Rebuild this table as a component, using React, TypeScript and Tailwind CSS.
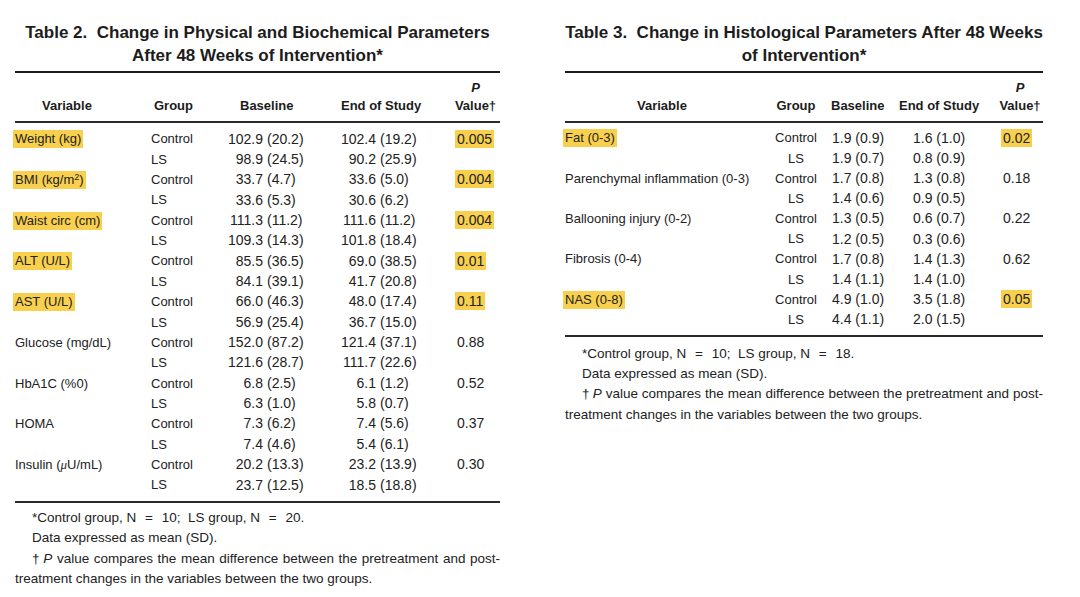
import React from 'react';

type Row = { v?: React.ReactNode; hl?: boolean; g: string; b: [string, string]; e: [string, string]; p?: string; phl?: boolean };

const leftRows: Row[] = [
  { v: 'Weight (kg)', hl: true, g: 'Control', b: ['102.9', '(20.2)'], e: ['102.4', '(19.2)'], p: '0.005', phl: true },
  { g: 'LS', b: ['98.9', '(24.5)'], e: ['90.2', '(25.9)'] },
  { v: <>BMI (kg/m<sup className="text-[9px]">2</sup>)</>, hl: true, g: 'Control', b: ['33.7', '(4.7)'], e: ['33.6', '(5.0)'], p: '0.004', phl: true },
  { g: 'LS', b: ['33.6', '(5.3)'], e: ['30.6', '(6.2)'] },
  { v: 'Waist circ (cm)', hl: true, g: 'Control', b: ['111.3', '(11.2)'], e: ['111.6', '(11.2)'], p: '0.004', phl: true },
  { g: 'LS', b: ['109.3', '(14.3)'], e: ['101.8', '(18.4)'] },
  { v: 'ALT (U/L)', hl: true, g: 'Control', b: ['85.5', '(36.5)'], e: ['69.0', '(38.5)'], p: '0.01', phl: true },
  { g: 'LS', b: ['84.1', '(39.1)'], e: ['41.7', '(20.8)'] },
  { v: 'AST (U/L)', hl: true, g: 'Control', b: ['66.0', '(46.3)'], e: ['48.0', '(17.4)'], p: '0.11', phl: true },
  { g: 'LS', b: ['56.9', '(25.4)'], e: ['36.7', '(15.0)'] },
  { v: 'Glucose (mg/dL)', g: 'Control', b: ['152.0', '(87.2)'], e: ['121.4', '(37.1)'], p: '0.88' },
  { g: 'LS', b: ['121.6', '(28.7)'], e: ['111.7', '(22.6)'] },
  { v: 'HbA1C (%0)', g: 'Control', b: ['6.8', '(2.5)'], e: ['6.1', '(1.2)'], p: '0.52' },
  { g: 'LS', b: ['6.3', '(1.0)'], e: ['5.8', '(0.7)'] },
  { v: 'HOMA', g: 'Control', b: ['7.3', '(6.2)'], e: ['7.4', '(5.6)'], p: '0.37' },
  { g: 'LS', b: ['7.4', '(4.6)'], e: ['5.4', '(6.1)'] },
  { v: <>Insulin (<i className="font-serif">μ</i>U/mL)</>, g: 'Control', b: ['20.2', '(13.3)'], e: ['23.2', '(13.9)'], p: '0.30' },
  { g: 'LS', b: ['23.7', '(12.5)'], e: ['18.5', '(18.8)'] },
];

const rightRows: Row[] = [
  { v: 'Fat (0-3)', hl: true, g: 'Control', b: ['1.9', '(0.9)'], e: ['1.6', '(1.0)'], p: '0.02', phl: true },
  { g: 'LS', b: ['1.9', '(0.7)'], e: ['0.8', '(0.9)'] },
  { v: 'Parenchymal inflammation (0-3)', g: 'Control', b: ['1.7', '(0.8)'], e: ['1.3', '(0.8)'], p: '0.18' },
  { g: 'LS', b: ['1.4', '(0.6)'], e: ['0.9', '(0.5)'] },
  { v: 'Ballooning injury (0-2)', g: 'Control', b: ['1.3', '(0.5)'], e: ['0.6', '(0.7)'], p: '0.22' },
  { g: 'LS', b: ['1.2', '(0.5)'], e: ['0.3', '(0.6)'] },
  { v: 'Fibrosis (0-4)', g: 'Control', b: ['1.7', '(0.8)'], e: ['1.4', '(1.3)'], p: '0.62' },
  { g: 'LS', b: ['1.4', '(1.1)'], e: ['1.4', '(1.0)'] },
  { v: 'NAS (0-8)', hl: true, g: 'Control', b: ['4.9', '(1.0)'], e: ['3.5', '(1.8)'], p: '0.05', phl: true },
  { g: 'LS', b: ['4.4', '(1.1)'], e: ['2.0', '(1.5)'] },
];

const Mark = ({ on, children, className = '' }: { on?: boolean; children: React.ReactNode; className?: string }) => (
  <span className={`inline-block leading-[18px] px-[2px] ${on ? 'bg-[#f8d04e]' : ''} ${className}`}>{children}</span>
);

const Title = ({ children }: { children: React.ReactNode }) => (
  <h2 className="pt-[21px] text-center text-[17px] font-bold leading-[23px] text-[#1c1c1c]">{children}</h2>
);

const PHead = ({ className }: { className: string }) => (
  <div className={`flex flex-col items-center ${className}`}>
    <span className="italic">P</span>
    <span>Value†</span>
  </div>
);

const Eq = () => <span className="mx-[5px]">=</span>;

// footnotes: last note split into its two printed lines, first one justified edge to edge
const Notes = ({ n }: { n: string }) => (
  <div className="text-[13.5px] leading-[20.3px] text-[#222]">
    <p className="pl-[17px]">
      *Control group, N <Eq /> 10;&nbsp; LS group, N <Eq /> {n}.
    </p>
    <p className="pl-[17px]">Data expressed as mean (SD).</p>
    <p className="pl-[17px] text-justify [text-align-last:justify]">
      <span className="mr-[3px]">†</span>
      <i>P</i> value compares the mean difference between the pretreatment and post-
    </p>
    <p>treatment changes in the variables between the two groups.</p>
  </div>
);

function LeftTable() {
  return (
    <div className="w-[485px] shrink-0">
      <Title>
        Table 2.&nbsp; Change in Physical and Biochemical Parameters
        <br />
        After 48 Weeks of Intervention*
      </Title>
      <div className="mt-[4px] h-[2px] bg-[#1a1a1a]" />
      <div className="grid grid-cols-[136px_64px_103px_126px_56px] items-end pt-[6px] pb-[6px] text-[13px] font-bold leading-[18px] text-[#1c1c1c]">
        <span className="pl-[27px]">Variable</span>
        <span className="pl-[3px]">Group</span>
        <span className="pl-[25px]">Baseline</span>
        <span className="pl-[23px]">End of Study</span>
        <PHead className="ml-[13px] w-[37px]" />
      </div>
      <div className="h-[2px] bg-[#2a2a2a]" />
      <div className="grid grid-cols-[136px_64px_103px_126px_56px] auto-rows-[20.35px] items-center pt-[6px] pb-[6px] text-[#222]">
        {leftRows.map((r, i) => (
          <React.Fragment key={i}>
            <span className="text-[13px]">{r.v && <Mark on={r.hl} className="-ml-[2px]">{r.v}</Mark>}</span>
            <span className="text-[13px]">{r.g}</span>
            <span className="flex text-[14px]">
              <span className="w-[48px] text-right">{r.b[0]}</span>
              <span className="pl-[4px]">{r.b[1]}</span>
            </span>
            <span className="flex text-[14px]">
              <span className="w-[58px] text-right">{r.e[0]}</span>
              <span className="pl-[4px]">{r.e[1]}</span>
            </span>
            <span className="pl-[11px] text-[14px]">{r.p && <Mark on={r.phl}>{r.p}</Mark>}</span>
          </React.Fragment>
        ))}
      </div>
      <div className="h-[2px] bg-[#2a2a2a]" />
      <div className="pt-[5px]">
        <Notes n="20" />
      </div>
    </div>
  );
}

function RightTable() {
  return (
    <div className="w-[478px] shrink-0">
      <Title>
        Table 3.&nbsp; Change in Histological Parameters After 48 Weeks
        <br />
        of Intervention*
      </Title>
      <div className="mt-[4px] h-[2px] bg-[#1a1a1a]" />
      <div className="grid grid-cols-[205px_52px_70px_100px_51px] items-end pt-[6px] pb-[6px] text-[13px] font-bold leading-[18px] text-[#1c1c1c]">
        <span className="pl-[72px]">Variable</span>
        <span className="text-center">Group</span>
        <span className="pl-[9px]">Baseline</span>
        <span className="pl-[7px]">End of Study</span>
        <PHead className="ml-[5px] w-[46px]" />
      </div>
      <div className="h-[2px] bg-[#2a2a2a]" />
      <div className="grid grid-cols-[205px_52px_70px_100px_51px] auto-rows-[20.2px] items-center pt-[5px] pb-[5px] text-[#222]">
        {rightRows.map((r, i) => (
          <React.Fragment key={i}>
            <span className="text-[13px]">{r.v && <Mark on={r.hl} className="-ml-[2px]">{r.v}</Mark>}</span>
            <span className="text-center text-[13px]">{r.g}</span>
            <span className="pl-[10px] text-[14px] whitespace-nowrap">{r.b[0]} {r.b[1]}</span>
            <span className="pl-[21px] text-[14px] whitespace-nowrap">{r.e[0]} {r.e[1]}</span>
            <span className="pl-[9px] text-[14px]">{r.p && <Mark on={r.phl}>{r.p}</Mark>}</span>
          </React.Fragment>
        ))}
      </div>
      <div className="h-[2px] bg-[#2a2a2a]" />
      <div className="pt-[7px]">
        <Notes n="18" />
      </div>
    </div>
  );
}

export default function App() {
  return (
    <div className="flex h-[597px] w-[1080px] gap-[65px] bg-white pl-[15px] font-['Liberation_Sans',Arial,sans-serif]">
      <LeftTable />
      <RightTable />
    </div>
  );
}
